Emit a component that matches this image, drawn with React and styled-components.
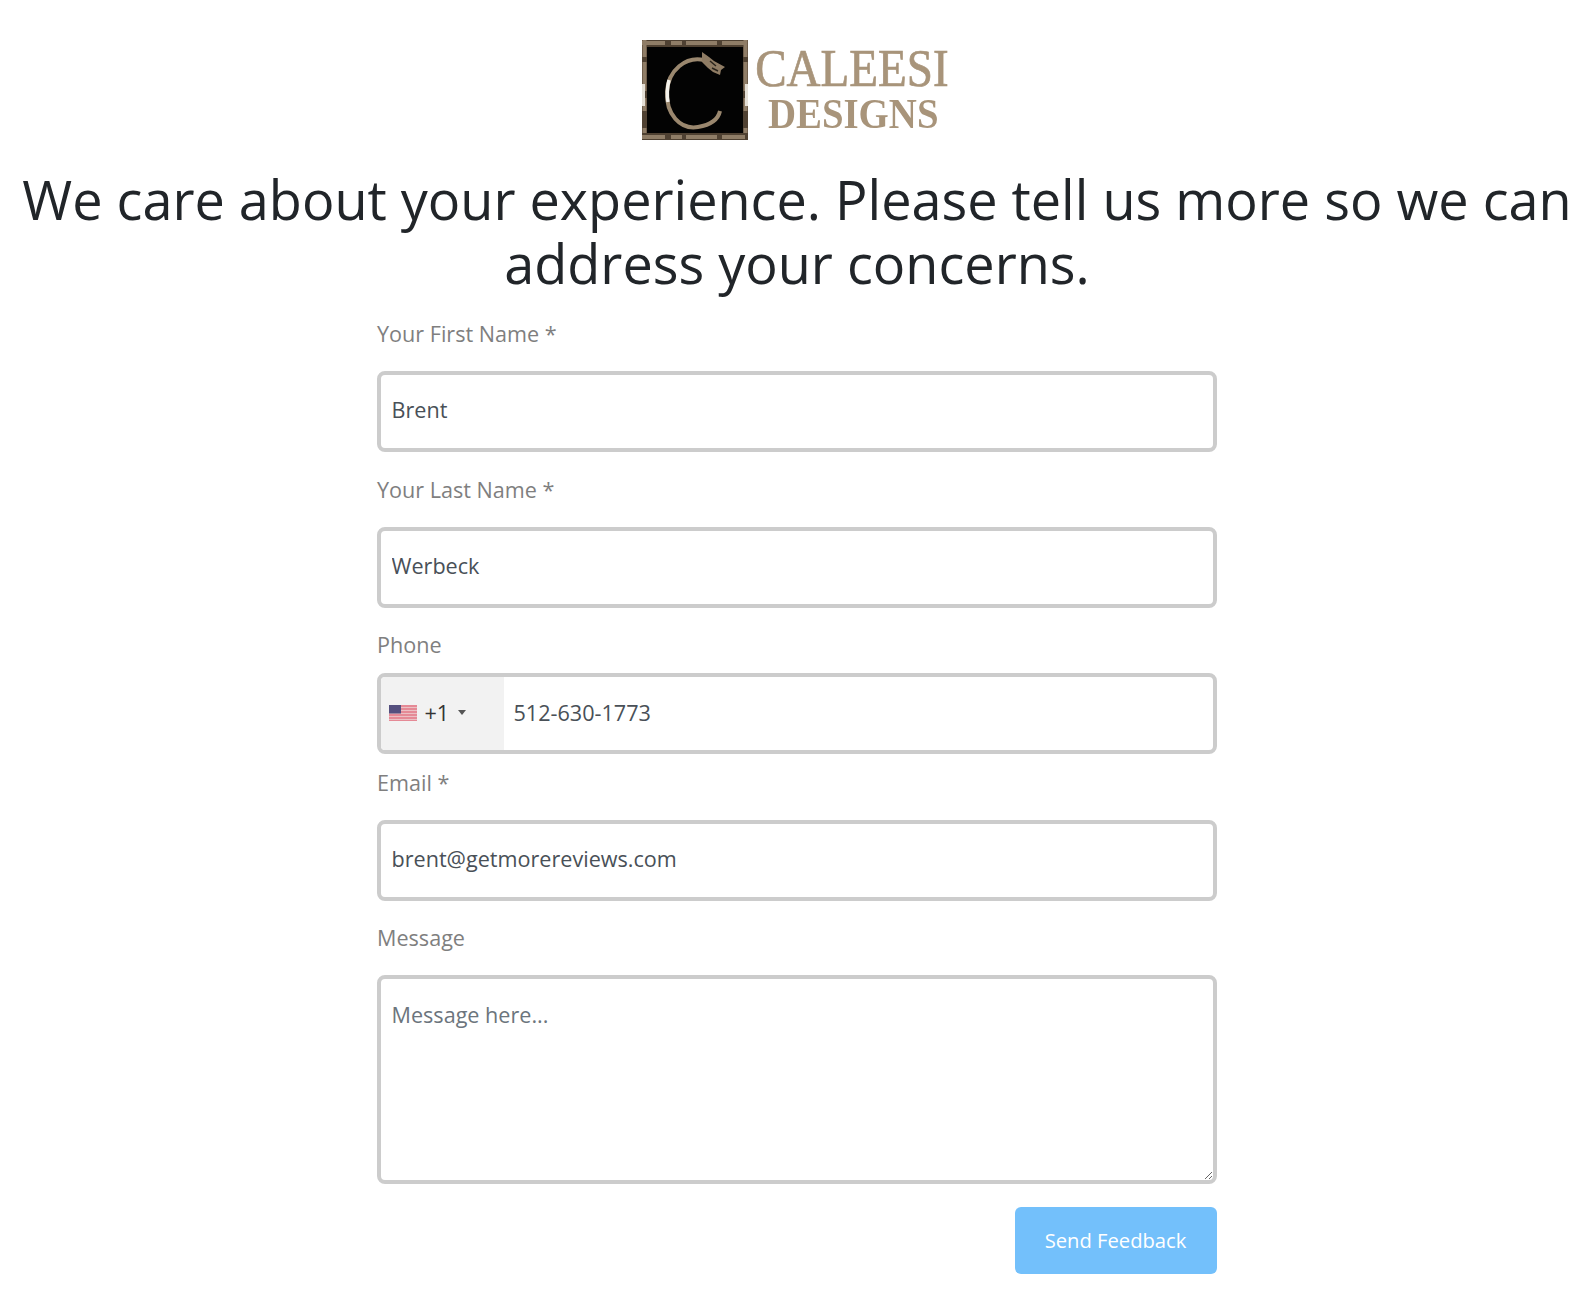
import styled, { createGlobalStyle } from "styled-components";

const GlobalStyle = createGlobalStyle`
  html, body {
    margin: 0;
    padding: 0;
    background: #fff;
    font-family: "Open Sans", sans-serif;
  }
`;

const Page = styled.div`
  width: 1595px;
  height: 1301px;
  overflow: hidden;
  display: flex;
  flex-direction: column;
  align-items: center;
`;

const Logo = styled.div`
  margin-top: 40px;
  height: 100px;
  width: 310px;
  display: flex;
  gap: 5px;
  svg {
    flex: none;
    margin-left: -1px;
    filter: blur(0.7px);
  }
`;

const LogoWords = styled.div`
  display: flex;
  flex-direction: column;
  align-items: center;
  width: 198px;
  font-family: "Liberation Serif", serif;
  color: #a8947a;
  filter: blur(0.5px);
`;

const LogoTop = styled.span`
  font-size: 52px;
  line-height: 46px;
  margin-top: 6px;
  -webkit-text-stroke: 0.7px #a8947a;
  transform: scaleX(0.905);
  white-space: nowrap;
`;

const LogoBottom = styled.span`
  font-size: 42px;
  line-height: 42px;
  margin: 1px 0 0 3px;
  font-weight: bold;
  transform: scaleX(0.925);
  white-space: nowrap;
`;

const Heading = styled.h1`
  margin: 27px 1px 0 0;
  width: 1594px;
  text-align: center;
  font-size: 54px;
  line-height: 64px;
  font-weight: 400;
  color: #212529;
`;

const Form = styled.form`
  width: 840px;
  margin: 23px 2px 0 0;
  display: flex;
  flex-direction: column;
`;

const Label = styled.label`
  display: block;
  padding-left: 0.5px;
  font-size: 21.6px;
  line-height: 32px;
  color: #7f7f7f;
  margin-bottom: ${(props) => props.$gap}px;
`;

const Field = styled.div`
  margin-bottom: ${(props) => props.$gap}px;
`;

const Input = styled.input`
  display: block;
  box-sizing: border-box;
  width: 100%;
  height: 81px;
  border: 4px solid #cccccc;
  border-radius: 8px;
  padding: 0 11px 5px;
  font: 400 21.6px "Open Sans", sans-serif;
  color: #495057;
  background: #fff;
  outline: none;
`;

const PhoneBox = styled.div`
  box-sizing: border-box;
  height: 81px;
  border: 4px solid #cccccc;
  border-radius: 8px;
  display: flex;
  align-items: center;
  overflow: hidden;
`;

const CountryPicker = styled.div`
  width: 123px;
  height: 100%;
  background: #f2f2f2;
  display: flex;
  align-items: center;
  padding: 0 0 2px 8px;
  box-sizing: border-box;
  font-size: 21.6px;
  color: #333;
`;

const DialCode = styled.span`
  margin-left: 8px;
`;

const Caret = styled.span`
  width: 0;
  height: 0;
  margin-left: 9px;
  border-left: 4px solid transparent;
  border-right: 4px solid transparent;
  border-top: 5px solid #555;
`;

const PhoneInput = styled.input`
  flex: 1;
  border: 0;
  outline: none;
  padding: 0 0 2px 10px;
  font: 400 21.6px "Open Sans", sans-serif;
  color: #495057;
  background: transparent;
`;

const TextArea = styled.textarea`
  display: block;
  box-sizing: border-box;
  width: 100%;
  height: 209px;
  border: 4px solid #cccccc;
  border-radius: 8px;
  padding: 20px 11px;
  font: 400 21.6px/32px "Open Sans", sans-serif;
  color: #495057;
  outline: none;
  &::placeholder {
    color: #6c757d;
    opacity: 1;
  }
`;

const Actions = styled.div`
  display: flex;
  justify-content: flex-end;
  margin-top: 23px;
`;

const SendButton = styled.button`
  width: 202px;
  height: 67px;
  border: 0;
  border-radius: 6px;
  background: #73c0fb;
  color: #fff;
  font: 400 20.2px "Open Sans", sans-serif;
  padding: 0 0 2px;
`;

function LogoMark() {
  return (
    <svg width="106" height="100" viewBox="0 0 106 100">
      <rect width="106" height="100" fill="#4f4132" />
      <path d="M0 3H106M0 97H106" stroke="#8f7d67" strokeWidth="4" strokeDasharray="23 6 11 4 31 5" />
      <path d="M2.5 0V100M103.5 0V100" stroke="#8f7d67" strokeWidth="4" strokeDasharray="17 5 29 7 13" />
      <path d="M0 44H3V66H0ZM103 44H106V66H103Z" fill="#e4dfd6" />
      <rect x="5" y="7" width="96" height="86" fill="#030303" />
      <path
        d="M62 20 C44 16 26 30 25 52 C24 74 38 90 56 87 C68 85 76 80 78 71"
        fill="none"
        stroke="#9a876e"
        strokeWidth="4"
      />
      <path d="M27 40 C25 48 25 56 26 62" fill="none" stroke="#f4f2ec" strokeWidth="3.5" />
      <path d="M60 12 L67 17 L72 21 L83 27 L79 30 L78 35 L71 32 L66 28 L60 22 Z" fill="#8f7c64" />
      <path d="M68 21 L74 26 M70 28 L76 31" stroke="#2a241c" strokeWidth="1.5" />
    </svg>
  );
}

function UsFlag() {
  return (
    <svg width="28" height="16" viewBox="0 0 28 16">
      <rect width="28" height="16" fill="#e58a96" />
      <path d="M0 2.5H28M0 5.5H28M0 8.5H28M0 11.5H28M0 14.5H28" stroke="#ecc0c4" strokeWidth="1.2" />
      <rect width="12" height="8.5" fill="#55507f" />
    </svg>
  );
}

export default function App() {
  return (
    <Page>
      <GlobalStyle />
      <Logo>
        <LogoMark />
        <LogoWords>
          <LogoTop>CALEESI</LogoTop>
          <LogoBottom>DESIGNS</LogoBottom>
        </LogoWords>
      </Logo>
      <Heading>
        We care about your experience. Please tell us more so we can
        <br />
        address your concerns.
      </Heading>
      <Form>
        <Label $gap={21}>Your First Name *</Label>
        <Field $gap={22}>
          <Input defaultValue="Brent" />
        </Field>
        <Label $gap={21}>Your Last Name *</Label>
        <Field $gap={21}>
          <Input defaultValue="Werbeck" />
        </Field>
        <Label $gap={12}>Phone</Label>
        <Field $gap={13}>
          <PhoneBox>
            <CountryPicker>
              <UsFlag />
              <DialCode>+1</DialCode>
              <Caret />
            </CountryPicker>
            <PhoneInput defaultValue="512-630-1773" />
          </PhoneBox>
        </Field>
        <Label $gap={21}>Email *</Label>
        <Field $gap={21}>
          <Input defaultValue="brent@getmorereviews.com" />
        </Field>
        <Label $gap={21}>Message</Label>
        <TextArea placeholder="Message here..." />
        <Actions>
          <SendButton type="button">Send Feedback</SendButton>
        </Actions>
      </Form>
    </Page>
  );
}
